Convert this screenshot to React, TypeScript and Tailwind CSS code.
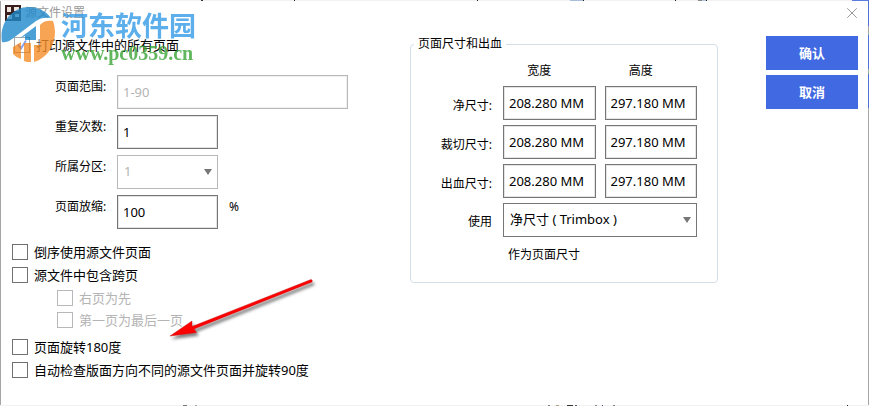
import type { ReactNode } from "react";
import { X } from "lucide-react";

const EDGE_MARKS = [
  { x: 201, w: 2, c: "#333333" },
  { x: 294, w: 1, c: "#222222" },
  { x: 477, w: 1, c: "#222222" },
  { x: 570, w: 13, c: "#a9bedb" },
  { x: 583, w: 1, c: "#222222" },
  { x: 675, w: 1, c: "#222222" },
  { x: 698, w: 4, c: "#888888" },
  { x: 702, w: 4, c: "#b5c6de" },
  { x: 706, w: 1, c: "#222222" },
  { x: 852, w: 17, c: "#5b7de0" },
];

const BOTTOM_MARKS = [
  { x: 183, w: 4, c: "#777777" },
  { x: 195, w: 2, c: "#aaaaaa" },
  { x: 548, w: 2, c: "#8a7a7a" },
  { x: 556, w: 3, c: "#b0a080" },
  { x: 567, w: 6, c: "#333333" },
  { x: 575, w: 2, c: "#556080" },
  { x: 595, w: 2, c: "#888888" },
  { x: 602, w: 1, c: "#405080" },
  { x: 613, w: 2, c: "#8a7a7a" },
  { x: 847, w: 1, c: "#222222" },
];

function Edge({ marks }: { marks: { x: number; w: number; c: string }[] }) {
  return (
    <svg className="block h-px w-full bg-[#f2f2f2]" viewBox="0 0 869 1" preserveAspectRatio="none" shapeRendering="crispEdges" aria-hidden="true">
      {marks.map((m) => (
        <rect key={m.x} x={m.x} y="0" width={m.w} height="1" fill={m.c} />
      ))}
    </svg>
  );
}

function Caret() {
  return (
    <svg className="pointer-events-none absolute top-[13px] right-1 h-2 w-3" viewBox="0 0 12 8" aria-hidden="true">
      <path d="M2 1h8L6 7z" fill="#777" />
    </svg>
  );
}

function Row({ label, id, children }: { label: string; id: string; children: ReactNode }) {
  return (
    <div className="flex items-start">
      <label htmlFor={id} className="w-[62px] shrink-0 pt-[3px] text-xs leading-[18px]">{label}</label>
      {children}
    </div>
  );
}

function Check({ id, label, disabled, checked }: { id: string; label: string; disabled?: boolean; checked?: boolean }) {
  return (
    <div className="flex items-center gap-1.5">
      <span className="relative flex">
        <input
          id={id}
          type="checkbox"
          disabled={disabled}
          defaultChecked={checked}
          className="peer size-4 appearance-none border border-[#707070] bg-white disabled:border-[#b8b8b8]"
        />
        <svg className="pointer-events-none absolute inset-0 hidden size-4 peer-checked:block" viewBox="0 0 16 16" aria-hidden="true">
          <path d="M4 7.5l3 4 5-8" fill="none" stroke="#4169e1" strokeWidth="2" />
        </svg>
      </span>
      <label htmlFor={id} className={disabled ? "text-[13px] leading-4 text-[#b4b4b4]" : "text-[13px] leading-4"}>{label}</label>
    </div>
  );
}

function SizeRow({ id, label }: { id: string; label: string }) {
  return (
    <>
      <label htmlFor={id} className="pt-1.5 pr-0.5 text-right text-xs leading-[18px]">{label}</label>
      <input id={id} defaultValue="208.280 MM" className="h-[34px] w-full border border-[#767676] px-[5px] text-[13px] shadow-[inset_0_0_0_1px_#e4e4e4]" />
      <input aria-label={label + "高度"} defaultValue="297.180 MM" className="h-[34px] w-full border border-[#767676] px-[5px] text-[13px] shadow-[inset_0_0_0_1px_#e4e4e4]" />
    </>
  );
}

function Watermark() {
  return (
    <div className="pointer-events-none absolute top-1 left-0 flex items-start gap-1 opacity-80">
      <svg className="h-[60px] w-[57px]" viewBox="0 4 57 60" aria-hidden="true">
        <circle cx="28" cy="35" r="26" fill="#fff" opacity=".5" />
        <path d="M2 42C-1 24 11 7 29 7c9 0 17 4 22 11-6-1-11 0-15 3L16 36C11 40 7 43 2 42z" fill="#1f8acb" />
        <path d="M20 38l16-12v14H25v-4z" fill="#1f8acb" />
        <path d="M13 47l8-5v17c-3-1-6-3-8-5z" fill="#f68f2a" />
        <path d="M24 43h7v19c-3 0-5 0-7-1z" fill="#f68f2a" />
        <path d="M40 25c3-4 8-5 13-4 6 17-2 36-19 41V45h6z" fill="#f68f2a" />
      </svg>
      <div className="pt-[3px]">
        <div className="font-['Noto_Sans_CJK_SC',sans-serif] text-[27px] leading-9 font-bold text-[#359ce8]">河东软件园</div>
        <div className="font-['Liberation_Serif',serif] text-[20px] leading-5 font-bold text-[#3aa537]">www.pc0359.cn</div>
      </div>
    </div>
  );
}

export default function App() {
  return (
    <div className="relative flex min-h-screen flex-col bg-white font-['Noto_Sans','Noto_Sans_CJK_SC',sans-serif] text-black">
      <Edge marks={EDGE_MARKS} />
      <div className="flex grow flex-col border-x border-[#a5a5a5]">
        <header className="flex h-6 items-center pr-[7px] pl-1">
          <svg className="size-4" viewBox="0 0 16 16" aria-hidden="true">
            <path d="M0 0h16v16H0z" fill="#39201e" />
            <path d="M2 2h4v5H2zM9 2h5v4H9zM2 10h5v4H2zM10 9h4v3h-4z" fill="#eee5e0" />
          </svg>
          <h1 className="grow pl-1 text-xs text-[#999]">源文件设置</h1>
          <button aria-label="关闭" className="text-[#777]"><X size={18} strokeWidth={1} /></button>
        </header>

        <main className="flex items-start pr-2.5 pl-[11px]">
          <section className="grow pt-3">
            <div className="pl-0.5">
              <Check id="all" label="打印源文件中的所有页面" checked />
            </div>
            <div className="flex flex-col gap-1.5 pt-[22px] pl-[43px]">
              <Row label="页面范围:" id="range">
                <input id="range" disabled defaultValue="1-90" className="h-[34px] w-[231px] border border-[#b8b8b8] px-[5px] text-[13px] text-[#b4b4b4] shadow-[inset_0_0_0_1px_#f0f0f0]" />
              </Row>
              <Row label="重复次数:" id="repeat">
                <input id="repeat" defaultValue="1" className="h-[34px] w-[101px] border border-[#767676] px-[5px] text-[13px] shadow-[inset_0_0_0_1px_#e4e4e4]" />
              </Row>
              <Row label="所属分区:" id="section">
                <span className="relative">
                  <select id="section" disabled className="block h-[34px] w-[101px] appearance-none border border-[#b8b8b8] px-1.5 text-[13px] text-[#b4b4b4] opacity-100">
                    <option>1</option>
                  </select>
                  <Caret />
                </span>
              </Row>
              <Row label="页面放缩:" id="scale">
                <input id="scale" defaultValue="100" className="h-[34px] w-[101px] border border-[#767676] px-[5px] text-[13px] shadow-[inset_0_0_0_1px_#e4e4e4]" />
                <span className="pt-[3px] pl-[11px] text-xs leading-[18px]">%</span>
              </Row>
            </div>
            <div className="flex flex-col gap-[7px] pt-[15px]">
              <Check id="reverse" label="倒序使用源文件页面" />
              <Check id="spread" label="源文件中包含跨页" />
              <div className="flex flex-col gap-1.5 pl-[45px]">
                <Check id="right" label="右页为先" disabled />
                <Check id="last" label="第一页为最后一页" disabled />
              </div>
              <div className="flex flex-col gap-[7px] pt-1">
                <Check id="rotate180" label="页面旋转180度" />
                <Check id="rotate90" label="自动检查版面方向不同的源文件页面并旋转90度" />
              </div>
            </div>
          </section>

          <fieldset className="mt-2.5 mr-12 w-[308px] shrink-0 rounded-sm border border-[#d3dfe8] pr-5 pb-[18px] pl-[7px]">
            <legend className="-ml-1 px-1 text-xs leading-[18px]">页面尺寸和出血</legend>
            <div className="grid grid-cols-[76px_1fr_1fr] items-center gap-x-[9px] gap-y-[5px] pt-[3px]">
              <span />
              <span className="pt-1.5 pr-5 pb-px text-center text-xs leading-[18px]">宽度</span>
              <span className="pt-1.5 pr-5 pb-px text-center text-xs leading-[18px]">高度</span>
              <SizeRow id="trim" label="净尺寸:" />
              <SizeRow id="cut" label="裁切尺寸:" />
              <SizeRow id="bleed" label="出血尺寸:" />
              <label htmlFor="box" className="pt-1 pr-0.5 text-right text-xs leading-[18px]">使用</label>
              <span className="relative col-span-2">
                <select id="box" className="block h-[34px] w-full appearance-none border border-[#767676] px-1.5 text-[13px]">
                  <option>净尺寸 ( Trimbox )</option>
                </select>
                <Caret />
              </span>
              <span />
              <span className="col-span-2 pt-1 pl-[5px] text-xs leading-[18px]">作为页面尺寸</span>
            </div>
          </fieldset>

          <div className="flex w-[92px] shrink-0 flex-col gap-[5px] pt-[11px]">
            <button className="h-[34px] bg-[#4169e1] pt-0.5 text-[13px] font-bold text-white">确认</button>
            <button className="h-[34px] bg-[#4169e1] pt-0.5 text-[13px] font-bold text-white">取消</button>
          </div>
        </main>
      </div>
      <Edge marks={BOTTOM_MARKS} />

      <svg className="pointer-events-none absolute top-0 right-0 h-[108px] w-px" viewBox="0 0 1 108" aria-hidden="true">
        <path d="M0 0h1v26H0zM0 35h1v34H0zM0 74h1v34H0z" fill="#4f70d4" />
      </svg>
      <Watermark />
      <svg className="pointer-events-none absolute top-[270px] left-[160px] h-20 w-40" viewBox="160 270 160 80" aria-hidden="true">
        <defs>
          <filter id="arrowShadow" x="-10%" y="-20%" width="120%" height="150%">
            <feDropShadow dx="2" dy="3" stdDeviation="1.5" floodColor="#000" floodOpacity="0.5" />
          </filter>
        </defs>
        <g filter="url(#arrowShadow)" fill="#f00" stroke="#b00000" strokeWidth=".4">
          <path d="M170 336L192 321l0 5.500L311 279.500q2 .5 1 2.500L194 329l2.500 3.500z" />
        </g>
      </svg>
    </div>
  );
}
